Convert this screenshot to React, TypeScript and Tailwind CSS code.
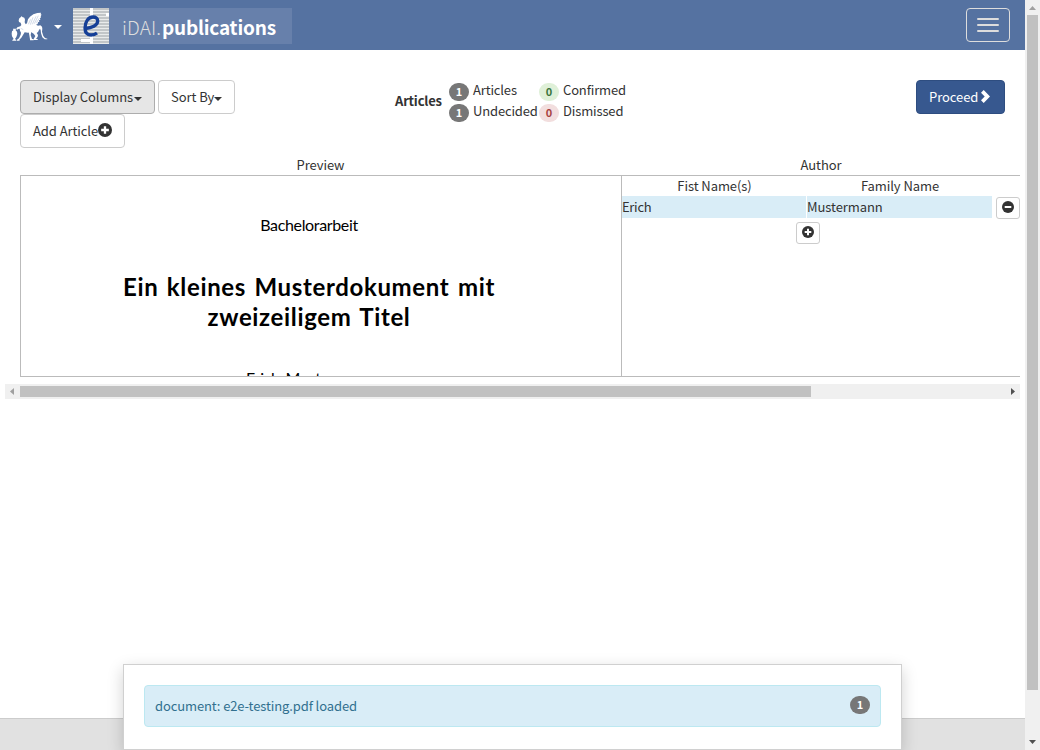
import React from "react";

const FONT = "font-['Noto_Sans_CJK_SC','Noto_Sans',sans-serif]";

function Caret() {
  return (
    <svg className="mt-[3px] h-1 w-2 shrink-0" viewBox="0 0 8 4" fill="currentColor">
      <path d="M0 0h8L4 4z" />
    </svg>
  );
}

function SignIcon({ minus = false, size = "size-3" }: { minus?: boolean; size?: string }) {
  return (
    <svg className={`${size} shrink-0`} viewBox="0 0 12 12">
      <circle cx="6" cy="6" r="6" fill="#333" />
      <path d={minus ? "M2.700 5h6.600v2H2.700z" : "M5 2.700h2V5h2.300v2H7v2.300H5V7H2.700V5H5z"} fill="#fff" />
    </svg>
  );
}

function Griffin() {
  return (
    <svg className="h-[30px] w-[38px]" viewBox="34 35 114 90" fill="#fff">
      <path d="M40 85h9l-1 5 4 4 1 7-3 9-4 6 4 3v2H38v-2l4-3-5-8-1-8 1-7 4-3z" />
      <path d="M57 60l2-6 5-4 2-3 2 3 6 2 2 6-1 8 3 6 4-3 3-12 6-8 10-7 12-4 11-1-1 5 3 1-3 4 1 4-3 3 1 4-4 2 1 4-4 2-1 5-5 2 6 3 7-1 5 4 1 6-1 9 4 13 5 6 7 2v2h-8l-7-6-4-12-1-9-2-5-3 4-3 6-4 3 4 6-1 5-5 7h5v3h-12v-3l5-9-5-7-8-5-9 2-10-1-5 8-5 8-6 6 1 3H52v-3l6-4 5-11 1-6-3-6-1-6-5 1-3 3-2-4 3-4 9-3 3-4-2-7-5-2z" />
      <path d="M87 94h8l-2 10 4 12h5v4H91v-3l-2-12z" />
      <path d="M86 72l7-15M92 73l8-22M98 72l11-24M104 70l12-24M110 67l9-13M63 84l8 4" fill="none" stroke="#91a5c6" strokeWidth="1.200" />
    </svg>
  );
}

function PublicationsMark() {
  return (
    <svg className="size-9 shrink-0" viewBox="0 0 36 36">
      <path fill="#c2c6c8" d="M0 0h36v36H0z" />
      <path
        stroke="#e9ebeb"
        strokeWidth="1"
        d="M0 2.500h36M0 5.500h36M0 8.500h36M0 11.500h36M0 14.500h36M0 17.500h36M0 20.500h36M0 23.500h36M0 26.500h36M0 29.500h36M0 32.500h36M0 35.500h36"
      />
      <path fill="#fff" d="M17 0h3v8h-3zM17 28h3v8h-3zM8 31h11v3H8zM33 5h3v3h-3z" />
      <path
        d="M12.500 20.500C18.500 20 24.700 17.500 24.700 13C24.700 10.500 22.800 9 20 9C15 9 12 14.500 12 20C12 24.500 14 27 18 27C20.500 27 22.500 26.200 24 25"
        fill="none"
        stroke="#153f97"
        strokeWidth="3.300"
      />
    </svg>
  );
}

function Badge({ value, tone }: { value: number; tone: string }) {
  return (
    <span className={`flex h-[18px] w-5 shrink-0 justify-center rounded-full text-[11px] font-bold leading-[17px] ${tone}`}>
      {value}
    </span>
  );
}

function Count({ value, label, tone }: { value: number; label: string; tone: string }) {
  return (
    <div className="flex h-[21px] items-start gap-1">
      <div className="mt-[3px]"><Badge value={value} tone={tone} /></div>
      <span className="tracking-[-0.15px]">{label}</span>
    </div>
  );
}

const BTN = "flex h-[34px] items-center whitespace-nowrap rounded border border-[#ccc] bg-white pl-3";
const BTN_ACTIVE = "flex h-[34px] items-center whitespace-nowrap rounded border border-[#adadad] bg-[#e6e6e6] pl-3";
const SMALL = "flex h-[22px] w-6 items-center justify-center rounded-[3px] border border-[#ccc] bg-white pb-[2px]";

export default function App() {
  return (
    <div className={`flex h-[750px] w-[1040px] overflow-hidden bg-white text-[13px] leading-5 tracking-[-0.07px] text-[#333] ${FONT}`}>
      <div className="flex w-[1025px] flex-col">
        <header className="flex h-[50px] shrink-0 items-center bg-[#5572a1] text-white">
          <div className="ml-[11px] mt-[3px]"><Griffin /></div>
          <div className="ml-[5px]"><Caret /></div>
          <div className="ml-[11px] mt-[2px] flex h-9 w-[219px] items-center bg-[#6780ab]">
            <PublicationsMark />
            <span className="ml-[13px] mt-px flex whitespace-nowrap text-[19px]">
              <span className="w-10 font-light tracking-[0.1px] text-[#ddd]">iDAI.</span>
              <b className="tracking-[-0.2px]">publications</b>
            </span>
          </div>
          <button className="ml-auto mr-[15px] flex h-[34px] w-11 flex-col items-center justify-center gap-1 rounded border border-[#ddd]">
            <span className="h-[2px] w-[22px] rounded-[1px] bg-[#ddd]" />
            <span className="h-[2px] w-[22px] rounded-[1px] bg-[#ddd]" />
            <span className="h-[2px] w-[22px] rounded-[1px] bg-[#ddd]" />
          </button>
        </header>

        <div className="flex h-[105px] shrink-0 pl-5 pr-5 pt-[30px]">
          <div className="w-[375px]">
            <div className="flex gap-[3px]">
              <button className={`${BTN_ACTIVE} w-[135px]`}>
                <span className="w-[101px] text-left">Display Columns</span><Caret />
              </button>
              <button className={`${BTN} w-[77px]`}>
                <span className="w-[43px] text-left">Sort By</span><Caret />
              </button>
            </div>
            <button className={`${BTN} w-[105px]`}>
              <span className="w-[65px] text-left">Add Article</span><SignIcon size="size-[14px] -mt-[3px]" />
            </button>
          </div>
          <b className="mt-[11px] w-[54px] tracking-[-0.2px]">Articles</b>
          <div className="w-[90px]">
            <Count value={1} label="Articles" tone="bg-[#777] text-white" />
            <Count value={1} label="Undecided" tone="bg-[#777] text-white" />
          </div>
          <div>
            <Count value={0} label="Confirmed" tone="bg-[#dff0d8] text-[#3c763d]" />
            <Count value={0} label="Dismissed" tone="bg-[#f2dede] text-[#a94442]" />
          </div>
          <button className="ml-auto flex h-[34px] w-[89px] items-center rounded border border-[#2e4d80] bg-[#37588f] pl-3 text-white">
            <span>Proceed</span>
            <svg className="ml-[3px] -mt-[2px] h-[13px] w-[9px]" viewBox="0 0 9 13" fill="currentColor">
              <path d="M0 2.700L2.700 0l6.300 6.500L2.700 13 0 10.300l3.700-3.800z" />
            </svg>
          </button>
        </div>

        <div className="flex h-5 shrink-0 pl-5 text-center">
          <div className="w-[601px]">Preview</div>
          <div className="w-[400px]">Author</div>
        </div>
        <div className="ml-5 flex h-[202px] w-[1000px] shrink-0 border-y border-l border-[#bbb]">
          <div className="flex w-[601px] flex-col items-center overflow-hidden border-r border-[#bbb] pr-6 font-['Lato',sans-serif] text-black">
            <div className="mt-[39px] h-5 whitespace-nowrap text-[16px] tracking-[-0.35px]">Bachelorarbeit</div>
            <div className="mt-[37px] whitespace-nowrap text-center text-[24px] font-bold leading-[30px] tracking-[0.65px] [word-spacing:2px]">
              Ein kleines Musterdokument mit<br />zweizeiligem Titel
            </div>
            <div className="mt-[36px] whitespace-nowrap text-[16px] tracking-[-0.3px] [word-spacing:2px]">Erich Mustermann</div>
          </div>
          <div className="flex-1">
            <div className="flex h-5 text-center">
              <div className="w-[185px]">Fist Name(s)</div>
              <div className="w-[186px]">Family Name</div>
            </div>
            <div className="flex h-[22px]">
              <div className="mr-px w-[184px] bg-[#d9edf7] leading-[22px] tracking-[-0.3px]">Erich</div>
              <div className="mr-1 w-[185px] bg-[#d9edf7] leading-[22px]">Mustermann</div>
              <button className={`${SMALL} mt-px`}><SignIcon minus /></button>
            </div>
            <button className={`${SMALL} ml-[174px] mt-1`}><SignIcon /></button>
          </div>
        </div>
        <div className="ml-[5px] mt-[7px] flex h-[15px] w-[1015px] shrink-0 items-center bg-[#f0f0f0]">
          <svg className="size-[15px]" viewBox="0 0 15 15"><path d="M9 4v7L5 7.500z" fill="#a0a0a0" /></svg>
          <div className="h-[11px] w-[791px] bg-[#c1c1c1]" />
          <svg className="ml-auto size-[15px]" viewBox="0 0 15 15"><path d="M6 4v7l4-3.500z" fill="#505050" /></svg>
        </div>

        <footer className="mt-auto flex h-8 shrink-0 items-end justify-center border-t border-[#ccc] bg-[#e1e1e1]">
          <div className="h-[86px] w-[779px] border border-[#d0d0d0] bg-white p-5 shadow-[0_5px_15px_rgba(0,0,0,0.18)]">
            <div className="flex h-[42px] justify-between rounded border border-[#bce8f1] bg-[#d9edf7] px-[10px] pt-[10px] tracking-[-0.11px] text-[#31708f]">
              <span>document: e2e-testing.pdf loaded</span>
              <Badge value={1} tone="bg-[#777] text-white" />
            </div>
          </div>
        </footer>
      </div>
      <div className="flex w-[15px] flex-col items-center bg-[#f0f0f0]">
        <svg className="size-[15px]" viewBox="0 0 15 15"><path d="M4 10h7L7.500 6z" fill="#a0a0a0" /></svg>
        <div className="h-[675px] w-[11px] bg-[#c1c1c1]" />
        <svg className="mt-auto size-[15px]" viewBox="0 0 15 15"><path d="M4 5h7L7.500 9z" fill="#505050" /></svg>
      </div>
    </div>
  );
}
